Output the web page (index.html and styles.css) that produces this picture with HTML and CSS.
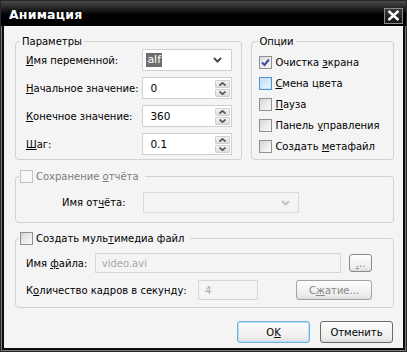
FILE: index.html
```html
<!DOCTYPE html>
<html lang="ru">
<head>
<meta charset="utf-8">
<title>Анимация</title>
<link rel="stylesheet" href="styles.css">
</head>
<body>
<div class="window">
  <div class="titlebar">
    <span class="title">Анимация</span>
    <span class="close"><svg width="13" height="11" viewBox="0 0 13 11"><path d="M1.5 1 L11.5 10 M11.5 1 L1.5 10" stroke="#fff" stroke-width="2.4" fill="none"/></svg></span>
  </div>
  <div class="body">
    <div class="top-row">
      <fieldset class="group params">
        <legend>Параметры</legend>
        <div class="form-grid">
          <span class="lbl"><u>И</u>мя переменной:</span>
          <div class="combo"><span class="sel">alf</span><svg class="chev" width="9" height="6" viewBox="0 0 9 6"><path d="M1 1 L4.5 4.5 L8 1" stroke="#4a4a55" stroke-width="2" fill="none"/></svg></div>

          <span class="lbl"><u>Н</u>ачальное значение:</span>
          <div class="spin"><span class="val">0</span><div class="spinbtns"><span class="sb"><svg width="7" height="4" viewBox="0 0 7 4"><path d="M0.5 3.5 L3.5 0.8 L6.5 3.5" stroke="#555" stroke-width="1.6" fill="none"/></svg></span><span class="sb"><svg width="7" height="4" viewBox="0 0 7 4"><path d="M0.5 0.5 L3.5 3.2 L6.5 0.5" stroke="#555" stroke-width="1.6" fill="none"/></svg></span></div></div>

          <span class="lbl"><u>К</u>онечное значение:</span>
          <div class="spin"><span class="val">360</span><div class="spinbtns"><span class="sb"><svg width="7" height="4" viewBox="0 0 7 4"><path d="M0.5 3.5 L3.5 0.8 L6.5 3.5" stroke="#555" stroke-width="1.6" fill="none"/></svg></span><span class="sb"><svg width="7" height="4" viewBox="0 0 7 4"><path d="M0.5 0.5 L3.5 3.2 L6.5 0.5" stroke="#555" stroke-width="1.6" fill="none"/></svg></span></div></div>

          <span class="lbl"><u>Ш</u>аг:</span>
          <div class="spin"><span class="val">0.1</span><div class="spinbtns"><span class="sb"><svg width="7" height="4" viewBox="0 0 7 4"><path d="M0.5 3.5 L3.5 0.8 L6.5 3.5" stroke="#555" stroke-width="1.6" fill="none"/></svg></span><span class="sb"><svg width="7" height="4" viewBox="0 0 7 4"><path d="M0.5 0.5 L3.5 3.2 L6.5 0.5" stroke="#555" stroke-width="1.6" fill="none"/></svg></span></div></div>
        </div>
      </fieldset>
      <fieldset class="group options">
        <legend>Опции</legend>
        <div class="checklist">
          <div class="check"><span class="cb checked"><svg width="9" height="9" viewBox="0 0 9 9"><path d="M1 4.5 L3.5 7 L8 1.5" stroke="#3b4ea3" stroke-width="2" fill="none"/></svg></span><span>Очистка <u>э</u>крана</span></div>
          <div class="check"><span class="cb hover"></span><span><u>С</u>мена цвета</span></div>
          <div class="check"><span class="cb"></span><span><u>П</u>ауза</span></div>
          <div class="check"><span class="cb"></span><span>Панель <u>у</u>правления</span></div>
          <div class="check"><span class="cb"></span><span>Создать <u>м</u>етафайл</span></div>
        </div>
      </fieldset>
    </div>

    <fieldset class="group report">
      <legend class="cblegend"><span class="cb disabled"></span><span class="dim">Сохранение <u>о</u>тчёта</span></legend>
      <div class="report-row">
        <span class="lbl rl">Имя от<u>ч</u>ёта:</span>
        <div class="combo disabled"><svg class="chev" width="9" height="6" viewBox="0 0 9 6"><path d="M1 1 L4.5 4.5 L8 1" stroke="#c4c4c4" stroke-width="2" fill="none"/></svg></div>
      </div>
    </fieldset>

    <fieldset class="group media">
      <legend class="cblegend mlegend"><span class="cb"></span><span>Создать муль<u>т</u>имедиа файл</span></legend>
      <div class="media-row">
        <span class="lbl ml1">Имя <u>ф</u>айла:</span>
        <div class="field disabled wide">video.avi</div>
        <span class="btn small"><u>.</u>..</span>
      </div>
      <div class="media-row row2">
        <span class="lbl ml2">К<u>о</u>личество кадров в секунду:</span>
        <div class="field disabled narrow">4</div>
        <span class="btn dis">С<u>ж</u>атие...</span>
      </div>
    </fieldset>

    <div class="actions">
      <span class="btn main ok">O<u>K</u></span>
      <span class="btn main">Отменить</span>
    </div>
  </div>
</div>
</body>
</html>
```

FILE: styles.css
```css
html, body {
  margin: 0;
  padding: 0;
  background: #fff;
}
body {
  font-family: "DejaVu Sans", "Liberation Sans", sans-serif;
  font-size: 10px;
  color: #000;
}
u {
  text-decoration: underline;
  text-underline-offset: 1px;
}
.window {
  width: 407px;
  height: 352px;
  box-sizing: border-box;
  border: 1px solid #262626;
  background: #7a7a7a;
  padding: 0 1px 1px 1px;
  display: flex;
  flex-direction: column;
}
.titlebar {
  height: 25px;
  margin: 0 -1px;
  background: linear-gradient(#4a4a4a 0px, #1a1a1a 9px, #000 14px, #000 100%);
  display: flex;
  align-items: center;
  justify-content: space-between;
  padding: 0 3px 0 8px;
  flex: none;
}
.title {
  color: #fff;
  font-weight: bold;
  font-size: 12.5px;
  letter-spacing: 0.2px;
  margin-top: 1px;
}
.close {
  width: 17px;
  height: 14px;
  border: 1px solid #8c8c8c;
  background: linear-gradient(#3a3a3a, #151515);
  display: flex;
  align-items: center;
  justify-content: center;
  margin-top: 4px;
}
.body {
  flex: 1;
  background: #f4f4f4;
  border: 2px solid #0c0c0c;
  border-top: none;
  padding: 9px 9px 0 11px;
  display: flex;
  flex-direction: column;
}
.top-row {
  display: flex;
  gap: 9px;
}
.group {
  margin: 0;
  border: 1px solid #d2d2cb;
  border-radius: 4px;
  box-sizing: border-box;
  min-width: 0;
}
.group legend {
  line-height: 13px;
  padding: 0 2px;
}
.params {
  width: 228px;
  height: 125px;
  padding: 1px 9px 0 10px;
}
.params legend {
  margin-left: -6px;
}
.form-grid {
  display: grid;
  grid-template-columns: 1fr 90px;
  grid-auto-rows: 22px;
  row-gap: 6px;
  align-items: center;
}
.lbl {
  white-space: nowrap;
}
.combo {
  height: 22px;
  box-sizing: border-box;
  border: 1px solid #cfcfcf;
  background: #fff;
  display: flex;
  align-items: center;
  padding: 0 9px 0 3px;
}
.combo .chev {
  margin-left: auto;
}
.sel {
  background: #6e6e6e;
  color: #fff;
  padding: 1px 1px 1px 1px;
  line-height: 12px;
  font-size: 11px;
}
.combo.disabled {
  width: 156px;
  height: 21px;
  border-color: #d9d9d9;
  background: #f4f4f4;
  padding-right: 8px;
}
.spin {
  height: 22px;
  box-sizing: border-box;
  border: 1px solid #cfcfcf;
  background: #fff;
  display: flex;
  align-items: center;
  padding: 0 1px 0 7px;
}
.val {
  flex: 1;
  font-size: 10.5px;
}
.spinbtns {
  display: flex;
  flex-direction: column;
  gap: 1px;
}
.sb {
  width: 15px;
  height: 8px;
  box-sizing: border-box;
  border: 1px solid #cfcfd4;
  border-radius: 1px;
  background: linear-gradient(#f4f4f6, #dcdce0);
  display: flex;
  align-items: center;
  justify-content: center;
}
.options {
  width: 143px;
  height: 125px;
  padding: 4px 6px 0 7px;
}
.options legend {
  margin-left: -1px;
  padding: 0 2px 0 1px;
}
.checklist {
  display: flex;
  flex-direction: column;
}
.check {
  height: 21px;
  display: flex;
  align-items: center;
  gap: 3px;
  white-space: nowrap;
}
.cb {
  width: 13px;
  height: 13px;
  box-sizing: border-box;
  border: 1px solid #8f9094;
  background: linear-gradient(135deg, #d4d4d4 0%, #eeeeee 60%, #fafafa 100%);
  display: inline-flex;
  align-items: center;
  justify-content: center;
  flex: none;
}
.cb.checked {
  background: linear-gradient(135deg, #dcdcdc 0%, #f0f0f0 70%);
}
.cb.hover {
  border-color: #4e92cf;
  background: linear-gradient(135deg, #b9dcf5 0%, #d9edfb 60%, #eef7fd 100%);
  box-shadow: inset 0 0 0 1px #cbe5f8;
}
.cb.disabled {
  border-color: #c3c3c3;
  background: #f7f7f7;
}
.cblegend {
  display: flex;
  align-items: center;
  gap: 3px;
  margin-left: 3px;
  padding: 0 6px 0 1px !important;
}
.mlegend {
  margin-left: -7px;
}
.dim {
  color: #7d7d7d;
}
.report {
  margin-top: 10px;
  height: 53px;
  padding: 9px 0 0 0;
}
.report-row {
  display: flex;
  align-items: center;
  padding-left: 46px;
}
.rl {
  width: 81px;
}
.media {
  margin-top: 9px;
  height: 76px;
  padding: 8px 21px 0 10px;
}
.media-row {
  display: flex;
  align-items: center;
  height: 20px;
}
.row2 {
  margin-top: 7px;
}
.ml1 {
  width: 69px;
}
.ml2 {
  width: 172px;
}
.field {
  height: 20px;
  box-sizing: border-box;
  border: 1px solid #d6d6d6;
  background: #f4f4f4;
  color: #a9a9a9;
  display: flex;
  align-items: center;
  padding-left: 6px;
}
.wide {
  width: 247px;
}
.narrow {
  width: 60px;
}
.btn {
  box-sizing: border-box;
  display: flex;
  align-items: center;
  justify-content: center;
  border: 1px solid #8a8a8a;
  border-radius: 3px;
  background: linear-gradient(#fdfdfd, #ececec 80%, #dcdcdc);
  white-space: nowrap;
}
.small {
  width: 23px;
  height: 18px;
  margin-left: 8px;
  color: #8a8a8a;
  align-items: flex-end;
  padding-bottom: 2px;
  line-height: 10px;
}
.dis {
  width: 76px;
  height: 20px;
  margin-left: auto;
  color: #8a8a8a;
  border-color: #a3a3a3;
}
.actions {
  margin-top: 13px;
  display: flex;
  justify-content: flex-end;
  gap: 10px;
  padding-right: 1px;
}
.main {
  width: 73px;
  height: 22px;
  border-color: #6b6b6b;
}
.ok {
  border-color: #6db3da;
  box-shadow: inset 0 0 0 1px #b6def2;
}
```
